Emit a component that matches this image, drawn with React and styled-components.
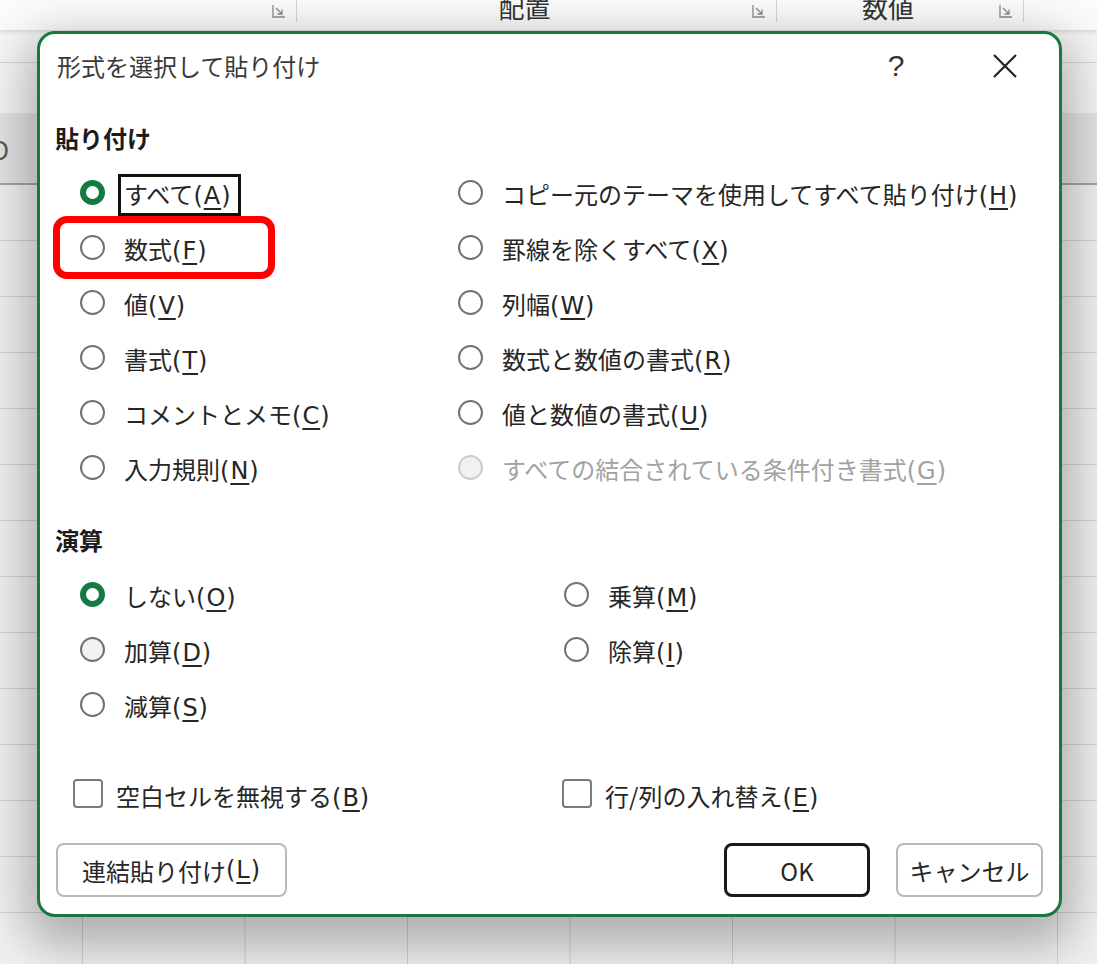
import React from 'react';
import styled, { createGlobalStyle, css } from 'styled-components';

const FONT = `"Noto Sans CJK JP", "Noto Sans", sans-serif`;
const LATIN = `"DejaVu Sans", "Noto Sans CJK JP", sans-serif`;

const GlobalStyle = createGlobalStyle`
  html, body { margin: 0; padding: 0; }
  body { font-family: ${FONT}; background: #eeeeee; }
  * { box-sizing: border-box; }
`;

const Screen = styled.div`
  position: relative;
  width: 1097px;
  height: 964px;
  overflow: hidden;
  display: flex;
  flex-direction: column;
  background: #eeeeee;
`;

/* ---------- Excel background ---------- */
const Ribbon = styled.div`
  flex: none;
  height: 30px;
  display: flex;
  background: #fbfbfb;
  overflow: hidden;
  position: relative;
  z-index: 1;
  box-shadow: 0 2px 4px rgba(0, 0, 0, 0.12);
`;

const RibbonGroup = styled.div`
  flex: none;
  width: ${(p) => p.$w}px;
  display: flex;
  align-items: flex-end;
  border-right: 1px solid #d2d2d2;
  margin: 0 0 8px;
`;

const RibbonLabel = styled.span`
  flex: 1;
  text-align: center;
  font-size: 26px;
  line-height: 26px;
  color: #333;
  margin-bottom: 2px;
`;

const Launcher = styled.svg`
  flex: none;
  width: 14px;
  height: 14px;
  margin: 0 10px 4px 0;
`;

const FormulaArea = styled.div`
  flex: none;
  height: 83px;
  background: #f6f6f6;
  background-image: linear-gradient(to bottom, transparent 32px, #d6d6d6 32px, #d6d6d6 33px, transparent 33px);
`;

const ColumnHeader = styled.div`
  flex: none;
  height: 72px;
  display: flex;
  margin-left: -80.5px;
  background: #e4e4e4;
  border-bottom: 2px solid #a5a5a5;
`;

const HeaderCell = styled.div`
  flex: none;
  width: 162.5px;
  display: flex;
  align-items: center;
  justify-content: center;
  font-size: 26px;
  color: #5a5a5a;
  border-right: 1px solid #cfcfcf;
`;

const Cells = styled.div`
  flex: 1;
  background-color: #f1f1f1;
  background-image:
    linear-gradient(to right, #d0d0d0 1px, transparent 1px),
    linear-gradient(to bottom, #d3d3d3 1px, transparent 1px);
  background-size: 162.5px 56px, 162.5px 56px;
  background-position: 82px 0, 0 55px;
`;

/* ---------- Dialog ---------- */
const Dialog = styled.section`
  position: absolute;
  left: 37px;
  top: 31px;
  width: 1025px;
  height: 886px;
  z-index: 2;
  display: flex;
  flex-direction: column;
  background: #ffffff;
  border: 3px solid #17793f;
  border-radius: 18px;
  box-shadow: 0 18px 48px 12px rgba(0, 0, 0, 0.28);
  font-family: ${FONT};
  color: #262626;
`;

const TitleBar = styled.header`
  flex: none;
  height: 64px;
  display: flex;
  align-items: center;
  padding: 0 26px 0 17px;
`;

const Title = styled.h1`
  flex: 1;
  margin: 0;
  font-size: 24px;
  line-height: 32px;
  font-weight: 400;
  color: #3a3a3a;
`;

const TitleButton = styled.span`
  flex: none;
  width: 56px;
  height: 44px;
  display: flex;
  align-items: center;
  justify-content: center;
  font-family: "Liberation Sans", sans-serif;
  font-size: 30px;
  font-weight: 400;
  color: #333;
  & + & {
    margin-left: 53px;
  }
`;

const Body = styled.div`
  flex: 1;
  display: flex;
  flex-direction: column;
  padding: 0 0 0 15px;
`;

const SectionHeading = styled.h2`
  margin: ${(p) => p.$top}px 0 0;
  font-size: 24px;
  line-height: 34px;
  font-weight: 700;
  color: #1c1c1c;
`;

const OptionGrid = styled.div`
  display: grid;
  grid-template-columns: ${(p) => p.$first}px 1fr;
  grid-auto-rows: 55px;
  margin-top: 12px;
  padding-left: 25px;
`;

const Option = styled.div`
  position: relative;
  display: flex;
  align-items: center;
  gap: 13px;
`;

const RadioDot = styled.span`
  flex: none;
  width: 25px;
  height: 25px;
  border-radius: 50%;
  margin-top: -4px;
  background: #ffffff;
  border: 2px solid #727272;
  ${(p) =>
    p.$checked &&
    css`
      border: 6.5px solid #127a42;
    `}
  ${(p) =>
    p.$hover &&
    css`
      background: #f2f2f2;
    `}
  ${(p) =>
    p.$disabled &&
    css`
      border-color: #cbcbcb;
      background: #f1f1f1;
    `}
`;

const Label = styled.span`
  font-size: 24px;
  line-height: 34px;
  padding: 0 6px 0 3px;
  white-space: nowrap;
  border: 3px solid ${(p) => (p.$focused ? '#111' : 'transparent')};
  color: ${(p) => (p.$disabled ? '#a2a2a2' : '#262626')};
`;

const Accel = styled.span`
  font-family: ${LATIN};
  font-size: 24px;
  letter-spacing: 1px;
`;

const Key = styled.span`
  text-decoration: underline;
  text-decoration-thickness: 2px;
  text-underline-offset: 4px;
`;

const Annotation = styled.span`
  position: absolute;
  left: -27px;
  top: -6px;
  width: 222px;
  height: 63px;
  border: 7px solid #ff0000;
  border-radius: 14px;
  pointer-events: none;
`;

const CheckRow = styled.div`
  display: grid;
  grid-template-columns: 489px 1fr;
  height: 55px;
  margin-top: 35px;
  padding-left: 18px;
`;

const CheckOption = styled.div`
  display: flex;
  align-items: center;
  gap: 7px;
`;

const CheckBox = styled.span`
  flex: none;
  width: 30px;
  height: 29px;
  margin-top: -6px;
  border: 2px solid #7a7a7a;
  border-radius: 4px;
  background: #fff;
`;

const Footer = styled.footer`
  flex: none;
  margin-top: auto;
  display: flex;
  align-items: center;
  padding: 0 16px 17px 16px;
`;

const Button = styled.button`
  flex: none;
  width: ${(p) => p.$w}px;
  height: 54px;
  padding: 0;
  display: flex;
  align-items: center;
  justify-content: center;
  font-family: ${FONT};
  font-size: 24px;
  color: #262626;
  background: #ffffff;
  border: 2px solid #b9b9b9;
  border-radius: 8px;
  ${(p) =>
    p.$primary &&
    css`
      border: 3px solid #1a1a1a;
    `}
`;

const Spacer = styled.span`
  flex: 1;
`;

const ButtonGap = styled.span`
  flex: none;
  width: 26px;
`;

/* ---------- data ---------- */
const pasteOptions = [
  { text: 'すべて', key: 'A', checked: true, focused: true },
  { text: 'コピー元のテーマを使用してすべて貼り付け', key: 'H' },
  { text: '数式', key: 'F', annotated: true },
  { text: '罫線を除くすべて', key: 'X' },
  { text: '値', key: 'V' },
  { text: '列幅', key: 'W' },
  { text: '書式', key: 'T' },
  { text: '数式と数値の書式', key: 'R' },
  { text: 'コメントとメモ', key: 'C' },
  { text: '値と数値の書式', key: 'U' },
  { text: '入力規則', key: 'N' },
  { text: 'すべての結合されている条件付き書式', key: 'G', disabled: true },
];

const opOptions = [
  { text: 'しない', key: 'O', checked: true },
  { text: '乗算', key: 'M' },
  { text: '加算', key: 'D', hover: true },
  { text: '除算', key: 'I' },
  { text: '減算', key: 'S' },
  null,
];

function LauncherIcon() {
  return (
    <Launcher viewBox="0 0 14 14">
      <path d="M1 1v12h12" fill="none" stroke="#8a8a8a" strokeWidth="1.3" />
      <path d="M4 4l6 6M10 5.5V10H5.5" fill="none" stroke="#8a8a8a" strokeWidth="1.3" />
    </Launcher>
  );
}

function AccessKey({ k }) {
  return (
    <Accel>
      (<Key>{k}</Key>)
    </Accel>
  );
}

function Radio({ opt }) {
  if (!opt) return <span />;
  return (
    <Option>
      <RadioDot $checked={opt.checked} $disabled={opt.disabled} $hover={opt.hover} />
      <Label $focused={opt.focused} $disabled={opt.disabled}>
        {opt.text}
        <AccessKey k={opt.key} />
      </Label>
      {opt.annotated && <Annotation />}
    </Option>
  );
}

export default function App() {
  return (
    <>
      <GlobalStyle />
      <Screen>
        <Ribbon>
          <RibbonGroup $w={297}>
            <RibbonLabel />
            <LauncherIcon />
          </RibbonGroup>
          <RibbonGroup $w={480}>
            <RibbonLabel>配置</RibbonLabel>
            <LauncherIcon />
          </RibbonGroup>
          <RibbonGroup $w={247}>
            <RibbonLabel>数値</RibbonLabel>
            <LauncherIcon />
          </RibbonGroup>
        </Ribbon>
        <FormulaArea />
        <ColumnHeader>
          {['D', 'E', 'F', 'G', 'H', 'I', 'J', 'K'].map((c) => (
            <HeaderCell key={c}>{c}</HeaderCell>
          ))}
        </ColumnHeader>
        <Cells />

        <Dialog>
          <TitleBar>
            <Title>形式を選択して貼り付け</Title>
            <TitleButton>?</TitleButton>
            <TitleButton>
              <svg width="26" height="26" viewBox="0 0 26 26">
                <path d="M2 2L24 24M24 2L2 24" stroke="#222" strokeWidth="2.2" fill="none" />
              </svg>
            </TitleButton>
          </TitleBar>
          <Body>
            <SectionHeading $top={23}>貼り付け</SectionHeading>
            <OptionGrid $first={378}>
              {pasteOptions.map((o, i) => (
                <Radio key={i} opt={o} />
              ))}
            </OptionGrid>
            <SectionHeading $top={26}>演算</SectionHeading>
            <OptionGrid $first={484}>
              {opOptions.map((o, i) => (
                <Radio key={i} opt={o} />
              ))}
            </OptionGrid>
            <CheckRow>
              <CheckOption>
                <CheckBox />
                <Label>
                  空白セルを無視する
                  <AccessKey k="B" />
                </Label>
              </CheckOption>
              <CheckOption>
                <CheckBox />
                <Label>
                  行/列の入れ替え
                  <AccessKey k="E" />
                </Label>
              </CheckOption>
            </CheckRow>
          </Body>
          <Footer>
            <Button $w={231}>
              連結貼り付け
              <AccessKey k="L" />
            </Button>
            <Spacer />
            <Button $w={146} $primary>
              OK
            </Button>
            <ButtonGap />
            <Button $w={147}>キャンセル</Button>
          </Footer>
        </Dialog>
      </Screen>
    </>
  );
}
